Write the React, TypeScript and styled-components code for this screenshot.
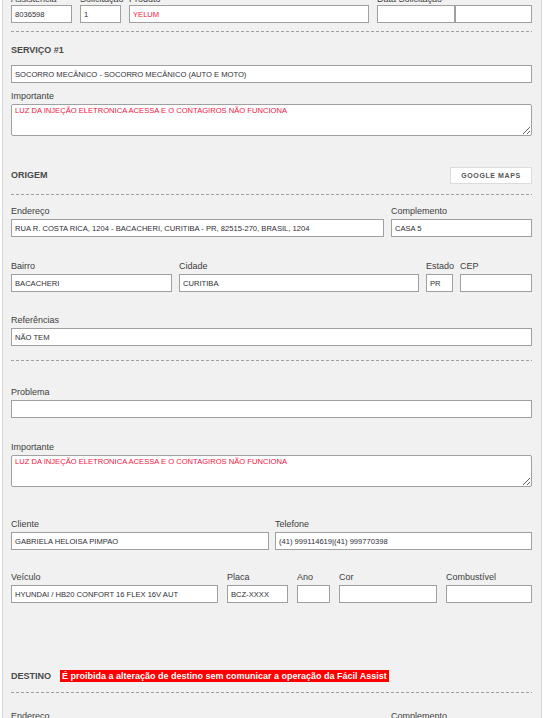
import { createGlobalStyle } from 'styled-components'
import styled from 'styled-components'

const GlobalStyle = createGlobalStyle`
  html, body {
    margin: 0;
    padding: 0;
    height: 100%;
    overflow: hidden;
    background: #fff;
  }

  body {
    font-family: 'Liberation Sans', Arial, sans-serif;
  }
`

const IMPORTANT_NOTE = 'LUZ DA INJEÇÃO ELETRONICA ACESSA E O CONTAGIROS NÃO FUNCIONA'

const App = () => {
  return (
    <>
      <GlobalStyle />
      <Panel>
        <Row $cols="61px 41px 240px 155px" $gap={8}>
          <Field>
            <Label $tight>Assistência</Label>
            <Input defaultValue="8036598" />
          </Field>
          <Field>
            <Label $tight>Solicitação</Label>
            <Input defaultValue="1" />
          </Field>
          <Field>
            <Label $tight>Produto</Label>
            <Input defaultValue="YELUM" $alert />
          </Field>
          <Field>
            <Label $tight>Data Solicitação</Label>
            <InputPair>
              <Input />
              <Input />
            </InputPair>
          </Field>
        </Row>

        <Divider $top={8} />

        <SectionHeader $top={13}>
          <Heading>Serviço #1</Heading>
        </SectionHeader>

        <Row $cols="1fr" $top={9}>
          <Input defaultValue="SOCORRO MECÂNICO - SOCORRO MECÂNICO (AUTO E MOTO)" />
        </Row>

        <Row $cols="1fr" $top={8}>
          <Field>
            <Label>Importante</Label>
            <TextArea defaultValue={IMPORTANT_NOTE} />
          </Field>
        </Row>

        <SectionHeader $top={31}>
          <Heading>Origem</Heading>
          <MapsButton type="button">Google Maps</MapsButton>
        </SectionHeader>

        <Divider $top={10} />

        <Row $cols="373px 141px" $gap={7} $top={11}>
          <Field>
            <Label>Endereço</Label>
            <Input defaultValue="RUA R. COSTA RICA, 1204 - BACACHERI, CURITIBA - PR, 82515-270, BRASIL, 1204" />
          </Field>
          <Field>
            <Label>Complemento</Label>
            <Input defaultValue="CASA 5" />
          </Field>
        </Row>

        <Row $cols="161px 240px 27px 72px" $gap={7} $top={24}>
          <Field>
            <Label>Bairro</Label>
            <Input defaultValue="BACACHERI" />
          </Field>
          <Field>
            <Label>Cidade</Label>
            <Input defaultValue="CURITIBA" />
          </Field>
          <Field>
            <Label>Estado</Label>
            <Input defaultValue="PR" />
          </Field>
          <Field>
            <Label>CEP</Label>
            <Input />
          </Field>
        </Row>

        <Row $cols="1fr" $top={23}>
          <Field>
            <Label>Referências</Label>
            <Input defaultValue="NÃO TEM" />
          </Field>
        </Row>

        <Divider $top={14} />

        <Row $cols="1fr" $top={26}>
          <Field>
            <Label>Problema</Label>
            <Input />
          </Field>
        </Row>

        <Row $cols="1fr" $top={24}>
          <Field>
            <Label>Importante</Label>
            <TextArea defaultValue={IMPORTANT_NOTE} />
          </Field>
        </Row>

        <Row $cols="258px 257px" $gap={6} $top={32}>
          <Field>
            <Label>Cliente</Label>
            <Input defaultValue="GABRIELA HELOISA PIMPAO" />
          </Field>
          <Field>
            <Label>Telefone</Label>
            <Input defaultValue="(41) 999114619|(41) 999770398" />
          </Field>
        </Row>

        <Row $cols="207px 61px 33px 98px 86px" $gap={9} $top={22}>
          <Field>
            <Label>Veículo</Label>
            <Input defaultValue="HYUNDAI / HB20 CONFORT 16 FLEX 16V AUT" />
          </Field>
          <Field>
            <Label>Placa</Label>
            <Input defaultValue="BCZ-XXXX" />
          </Field>
          <Field>
            <Label>Ano</Label>
            <Input />
          </Field>
          <Field>
            <Label>Cor</Label>
            <Input />
          </Field>
          <Field>
            <Label>Combustível</Label>
            <Input />
          </Field>
        </Row>

        <SectionHeader $top={67} $start>
          <Heading>Destino</Heading>
          <Warning>É proibida a alteração de destino sem comunicar a operação da Fácil Assist</Warning>
        </SectionHeader>

        <Divider $top={10} />

        <Row $cols="373px 141px" $gap={7} $top={18}>
          <Field>
            <Label>Endereço</Label>
            <Input />
          </Field>
          <Field>
            <Label>Complemento</Label>
            <Input />
          </Field>
        </Row>
      </Panel>
    </>
  )
}

const Panel = styled.div`
  box-sizing: border-box;
  width: 540px;
  min-height: 900px;
  margin: -6px 0 0 2px;
  padding: 0 9px 40px 8px;
  border-left: 1px solid #d8d8d8;
  border-right: 1px solid #d8d8d8;
  background: #f1f1f1;
`

const Row = styled.div<{ $cols: string; $gap?: number; $top?: number }>`
  display: grid;
  grid-template-columns: ${({ $cols }) => $cols};
  column-gap: ${({ $gap = 0 }) => $gap}px;
  margin-top: ${({ $top = 0 }) => $top}px;
`

const Field = styled.div`
  display: flex;
  flex-direction: column;
  min-width: 0;
`

const Label = styled.label<{ $tight?: boolean }>`
  display: block;
  margin-bottom: ${({ $tight }) => ($tight ? 0 : 2)}px;
  color: #404040;
  font-size: 9px;
  line-height: 11px;
  white-space: nowrap;
`

const Input = styled.input<{ $alert?: boolean }>`
  box-sizing: border-box;
  width: 100%;
  height: 18px;
  margin: 0;
  padding: 0 3px;
  border: 1px solid #a0a0a0;
  border-radius: 0;
  background: #fff;
  color: ${({ $alert }) => ($alert ? '#f2143f' : '#2e2e34')};
  font-family: 'Liberation Sans', Arial, sans-serif;
  font-size: 7.6px;
  outline: none;
`

const InputPair = styled.div`
  display: grid;
  grid-template-columns: 78px 77px;
`

const TextArea = styled.textarea`
  box-sizing: border-box;
  display: block;
  width: 100%;
  height: 32px;
  margin: 0;
  padding: 1px 3px;
  border: 1px solid #a0a0a0;
  border-radius: 2px;
  background: #fff;
  color: #f2143f;
  font-family: 'Liberation Sans', Arial, sans-serif;
  font-size: 7.6px;
  line-height: 9px;
  resize: vertical;
  outline: none;
`

const Divider = styled.div<{ $top?: number }>`
  height: 1px;
  margin-top: ${({ $top = 0 }) => $top}px;
  background: repeating-linear-gradient(90deg, #a0a0a0 0 3px, transparent 3px 5px);
`

const SectionHeader = styled.div<{ $top?: number; $start?: boolean }>`
  display: flex;
  align-items: center;
  justify-content: ${({ $start }) => ($start ? 'flex-start' : 'space-between')};
  gap: 9px;
  margin-top: ${({ $top = 0 }) => $top}px;
`

const Heading = styled.div`
  color: #4a4a4a;
  font-size: 9px;
  font-weight: 700;
  line-height: 11px;
  text-transform: uppercase;
`

const MapsButton = styled.button`
  box-sizing: border-box;
  width: 82px;
  height: 17px;
  padding: 0;
  border: 1px solid #dcdcdc;
  background: #fff;
  color: #555;
  font-family: 'Liberation Sans', Arial, sans-serif;
  font-size: 7px;
  font-weight: 700;
  letter-spacing: 0.6px;
  text-transform: uppercase;
  cursor: pointer;
`

const Warning = styled.span`
  padding: 0 2px;
  background: #ff0000;
  color: #fff;
  font-size: 9px;
  font-weight: 700;
  line-height: 12px;
  white-space: nowrap;
`

export default App
